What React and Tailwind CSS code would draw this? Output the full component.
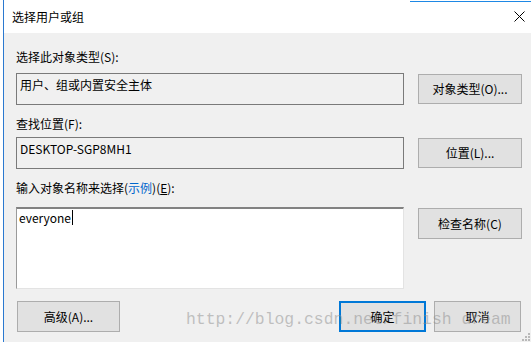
import React from "react";

const font = { fontFamily: '"Noto Sans CJK SC", "Noto Sans", sans-serif' };

function Btn({ children, w = "w-[104px]", h = "h-[30px]", primary, className = "" }) {
  return (
    <div
      className={`${w} ${h} ${className} flex items-center justify-center text-[12px] text-[#000] bg-[#e1e1e1] ${
        primary ? "border-2 border-[#0078d7]" : "border border-[#adadad]"
      }`}
    >
      {children}
    </div>
  );
}

function Field({ children, h = "h-[32px]" }) {
  return (
    <div className={`w-[388px] ${h} border border-[#7a7a7a] bg-[#f0f0f0] px-[3px] pt-[3px] text-[12px] leading-[16px] text-[#000]`}>
      {children}
    </div>
  );
}

export default function App() {
  return (
    <div className="w-[531px] h-[342px] bg-white flex relative overflow-hidden" style={font}>
      <div className="w-[3px] shrink-0 bg-white" />
      <div className="flex-1 flex flex-col border-l border-[#2b79d0]">
        {/* title bar */}
        <div className="h-[33px] bg-white flex flex-col">
          <div className="h-[2px] flex">
            <div className="w-[406px]" />
            <div className="flex-1 mt-[1px] h-[1px] bg-[#1e88e5]" />
          </div>
          <div className="flex-1 flex items-center justify-between pl-[8px] pr-[6px] pb-[2px]">
            <span className="text-[12px] text-black">选择用户或组</span>
            <svg width="11" height="11" viewBox="0 0 11 11" className="mb-[1px]">
              <path d="M0.5 0.5 L10.5 10.5 M10.5 0.5 L0.5 10.5" stroke="#000" strokeWidth="1" />
            </svg>
          </div>
        </div>

        {/* body */}
        <div className="flex-1 bg-[#f0f0f0] pl-[12px] flex flex-col">
          <div className="mt-[16px] h-[16px] leading-[16px] text-[12px] text-black">选择此对象类型(S):</div>
          <div className="mt-[8px] flex items-start">
            <Field>用户、组或内置安全主体</Field>
            <Btn className="ml-[14px] mt-[1px]">对象类型(O)...</Btn>
          </div>

          <div className="mt-[11px] h-[16px] leading-[16px] text-[12px] text-black">查找位置(F):</div>
          <div className="mt-[5px] flex items-start">
            <Field>DESKTOP-SGP8MH1</Field>
            <Btn className="ml-[14px] mt-[1px]">位置(L)...</Btn>
          </div>

          <div className="mt-[11px] h-[16px] leading-[16px] text-[12px] text-black">
            输入对象名称来选择(<span className="text-[#0066cc]">示例</span>)(<span className="underline">E</span>):
          </div>
          <div className="mt-[11px] flex items-start">
            <div className="w-[388px] h-[82px] bg-white border-t-2 border-l border-t-[#828282] border-l-[#9a9a9a] border-r border-b border-r-[#e3e3e3] border-b-[#e3e3e3] px-[2px] pt-[1px] text-[12px] leading-[16px] text-black flex items-start">
              <span>everyone</span>
              <span className="w-[1px] h-[15px] bg-black ml-[1px]" />
            </div>
            <Btn className="ml-[14px] mt-[1px]" h="h-[31px]">检查名称(C)</Btn>
          </div>

          <div className="mt-[12px] flex items-start">
            <Btn w="w-[103px]" h="h-[31px]" className="ml-[1px]">高级(A)...</Btn>
            <div className="flex-1" />
            <Btn w="w-[87px]" h="h-[31px]" primary>确定</Btn>
            <Btn w="w-[87px]" h="h-[31px]" className="ml-[8px] mr-[10px]">取消</Btn>
          </div>
        </div>
      </div>

      {/* watermark */}
      <div
        className="absolute z-10 left-[186px] top-[310px] text-[16.4px] leading-[20px] text-[rgba(140,140,140,0.5)] whitespace-pre pointer-events-none"
        style={{ fontFamily: '"Liberation Mono", monospace' }}
      >
        http://blog.csdn.net/finish dream
      </div>

      {/* resize grip */}
      <svg className="absolute right-[1px] bottom-[1px]" width="9" height="9" viewBox="0 0 9 9">
        <rect x="7" y="1" width="2" height="2" fill="#b8b8b8" />
        <rect x="4" y="4" width="2" height="2" fill="#b8b8b8" />
        <rect x="7" y="4" width="2" height="2" fill="#b8b8b8" />
        <rect x="1" y="7" width="2" height="2" fill="#b8b8b8" />
        <rect x="4" y="7" width="2" height="2" fill="#b8b8b8" />
        <rect x="7" y="7" width="2" height="2" fill="#b8b8b8" />
      </svg>
    </div>
  );
}
